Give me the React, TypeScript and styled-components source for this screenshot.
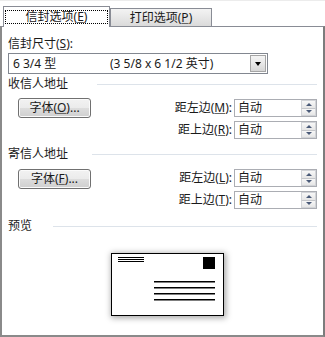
import React from 'react';
import styled, { createGlobalStyle } from 'styled-components';

const Global = createGlobalStyle`
  html, body { margin: 0; padding: 0; background: #fff; }
  body {
    font-family: "Noto Sans", "Noto Sans CJK SC", sans-serif;
    font-size: 12px;
    color: #1a1a1a;
  }
`;

const Dialog = styled.div`
  width: 325px;
  height: 337px;
  display: flex;
  flex-direction: column;
  background: #fff;
`;

const TabStrip = styled.div`
  height: 26px;
  box-sizing: border-box;
  border-top: 1px solid #ececec;
  display: flex;
  align-items: flex-end;
  padding-left: 3px;
  position: relative;
  z-index: 1;
`;

const ActiveTab = styled.div`
  width: 107px;
  height: 21px;
  margin-bottom: -1px;
  box-sizing: border-box;
  border: 1px solid #898c95;
  border-bottom: none;
  background: #fff;
  padding: 3px 1px 0 1px;
`;

const FocusRect = styled.div`
  height: 14px;
  border: 1px dotted #000;
  box-sizing: border-box;
  display: flex;
  align-items: center;
  justify-content: center;
  line-height: 12px;
`;

const InactiveTab = styled.div`
  width: 102px;
  height: 18px;
  box-sizing: border-box;
  border: 1px solid #898c95;
  border-bottom: none;
  background: linear-gradient(#f3f3f3, #e6e6e6 55%, #dadada);
  display: flex;
  align-items: center;
  justify-content: center;
  line-height: 14px;
`;

const Panel = styled.div`
  flex: 1;
  box-sizing: border-box;
  border: 1px solid #898c95;
  border-left: 2px solid #8a8a8a;
  border-right: 2px solid #7c7c7c;
  border-bottom: 2px solid #8a8a8a;
  padding: 9px 6px 0 6px;
  display: flex;
  flex-direction: column;
`;

const Key = styled.span`
  text-decoration: underline;
  text-underline-offset: 1px;
  text-decoration-color: #666;
`;

const FieldLabel = styled.div`
  height: 16px;
  line-height: 16px;
`;

const Select = styled.div`
  margin-top: 1px;
  width: 260px;
  height: 21px;
  box-sizing: border-box;
  border: 1px solid #828790;
  display: flex;
  align-items: center;
  padding-left: 4px;
  line-height: 14px;
`;

const SelectName = styled.span`
  width: 97px;
`;

const DropButton = styled.div`
  margin-left: auto;
  margin-right: 1px;
  width: 16px;
  height: 17px;
  box-sizing: border-box;
  border: 1px solid #a5a5a5;
  background: linear-gradient(#f4f4f4, #e8e8e8 50%, #d6d6d6);
  display: flex;
  align-items: center;
  justify-content: center;
  &::after {
    content: "";
    border-left: 3.5px solid transparent;
    border-right: 3.5px solid transparent;
    border-top: 4px solid #000;
  }
`;

const SectionHeader = styled.div<{ $top: number; $gap: number }>`
  margin-top: ${p => p.$top}px;
  height: 16px;
  line-height: 16px;
  display: flex;
  align-items: center;
  &::after {
    content: "";
    flex: 1;
    height: 1px;
    margin-left: ${p => p.$gap}px;
    background: #dde3ea;
  }
`;

const AddressBlock = styled.div<{ $top: number }>`
  margin-top: ${p => p.$top}px;
  display: flex;
  justify-content: space-between;
  align-items: flex-start;
  padding-left: 10px;
`;

const FontButton = styled.button`
  width: 73px;
  height: 20px;
  padding: 0;
  box-sizing: border-box;
  border: 1px solid #707070;
  border-radius: 3px;
  background: linear-gradient(#f2f2f2 0%, #ebebeb 50%, #dddddd 51%, #cfcfcf 100%);
  box-shadow: inset 0 0 0 1px #fbfbfb;
  font-family: inherit;
  font-size: 12px;
  color: #1a1a1a;
  line-height: 14px;
`;

const SpinColumn = styled.div<{ $lead: number }>`
  margin-top: ${p => p.$lead}px;
  display: flex;
  flex-direction: column;
  gap: 4px;
`;

const SpinRow = styled.div`
  display: flex;
  align-items: center;
  justify-content: flex-end;
`;

const SpinLabel = styled.span`
  margin-right: 2px;
  line-height: 14px;
`;

const SpinBox = styled.div`
  width: 83px;
  height: 18px;
  box-sizing: border-box;
  border: 1px solid #abadb3;
  display: flex;
  align-items: center;
  padding-left: 3px;
  line-height: 14px;
`;

const Spinner = styled.div`
  margin-left: auto;
  width: 15px;
  height: 16px;
  display: flex;
  flex-direction: column;
`;

const SpinHalf = styled.div<{ $up: boolean }>`
  flex: 1;
  box-sizing: border-box;
  border: 1px solid #d2d4d8;
  ${p => (p.$up ? 'border-bottom: 1px solid #c4c6ca;' : 'border-top: none;')}
  background: linear-gradient(#f7f7f7, #e6e6e6);
  display: flex;
  align-items: center;
  justify-content: center;
  &::after {
    content: "";
    border-left: 3px solid transparent;
    border-right: 3px solid transparent;
    ${p => (p.$up ? 'border-bottom: 3px solid #4a5a78;' : 'border-top: 3px solid #4a5a78;')}
  }
`;

const PreviewArea = styled.div`
  margin-top: 19px;
  padding-left: 103px;
  display: flex;
`;

const Envelope = styled.div`
  width: 113px;
  height: 63px;
  box-sizing: border-box;
  border: 1px solid #000;
  background: #fff;
  box-shadow: 1px 1px 6px 1px rgba(0, 0, 0, 0.35);
  display: flex;
`;

type SpinProps = { label: string; k: string };

const SpinField = ({ label, k }: SpinProps) => (
  <SpinRow>
    <SpinLabel>
      {label}(<Key>{k}</Key>):
    </SpinLabel>
    <SpinBox>
      自动
      <Spinner>
        <SpinHalf $up />
        <SpinHalf $up={false} />
      </Spinner>
    </SpinBox>
  </SpinRow>
);

export default function App() {
  return (
    <>
      <Global />
      <Dialog>
        <TabStrip>
          <ActiveTab>
            <FocusRect>
              信封选项(<Key>E</Key>)
            </FocusRect>
          </ActiveTab>
          <InactiveTab>
            打印选项(<Key>P</Key>)
          </InactiveTab>
        </TabStrip>
        <Panel>
          <FieldLabel>
            信封尺寸(<Key>S</Key>):
          </FieldLabel>
          <Select>
            <SelectName>6 3/4 型</SelectName>
            <span>(3 5/8 x 6 1/2 英寸)</span>
            <DropButton />
          </Select>

          <SectionHeader $top={2} $gap={29}>收信人地址</SectionHeader>
          <AddressBlock $top={6}>
            <FontButton>
              字体(<Key>O</Key>)...
            </FontButton>
            <SpinColumn $lead={1}>
              <SpinField label="距左边" k="M" />
              <SpinField label="距上边" k="R" />
            </SpinColumn>
          </AddressBlock>

          <SectionHeader $top={7} $gap={24}>寄信人地址</SectionHeader>
          <AddressBlock $top={7}>
            <FontButton>
              字体(<Key>F</Key>)...
            </FontButton>
            <SpinColumn $lead={0}>
              <SpinField label="距左边" k="L" />
              <SpinField label="距上边" k="T" />
            </SpinColumn>
          </AddressBlock>

          <SectionHeader $top={9} $gap={21}>预览</SectionHeader>
          <PreviewArea>
            <Envelope>
              <svg width="111" height="61" viewBox="0 0 111 61">
                <rect x="6" y="3" width="26" height="1" fill="#000" />
                <rect x="6" y="5" width="26" height="1" fill="#000" />
                <rect x="6" y="7" width="26" height="1" fill="#000" />
                <rect x="91" y="3" width="12" height="12" fill="#000" />
                <rect x="42" y="27" width="61" height="1.5" fill="#000" />
                <rect x="42" y="33" width="61" height="1.5" fill="#000" />
                <rect x="42" y="39" width="61" height="1.5" fill="#000" />
                <rect x="42" y="45" width="61" height="1.5" fill="#000" />
              </svg>
            </Envelope>
          </PreviewArea>
        </Panel>
      </Dialog>
    </>
  );
}
